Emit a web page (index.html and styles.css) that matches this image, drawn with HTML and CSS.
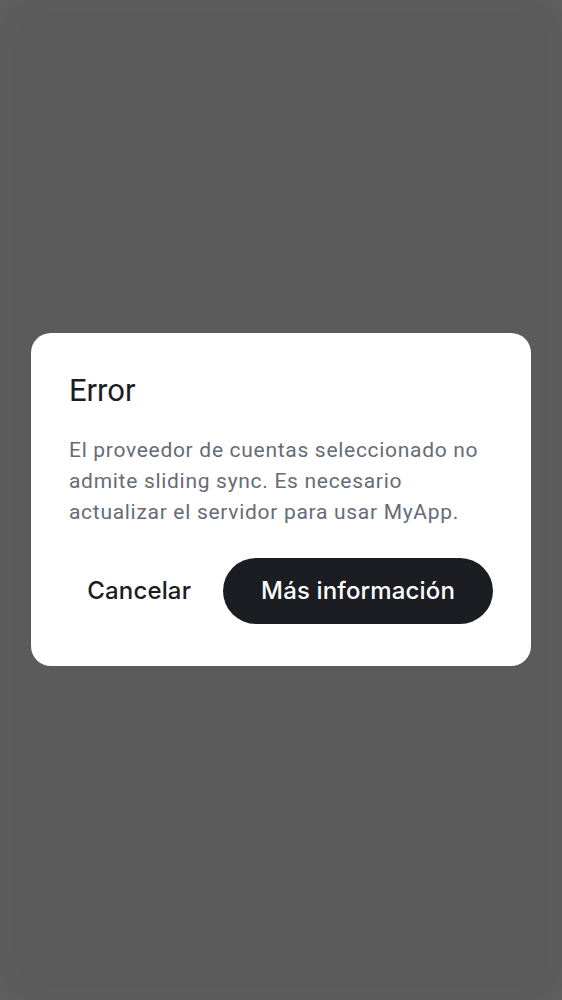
FILE: index.html
```html
<!DOCTYPE html>
<html lang="es">
<head>
<meta charset="utf-8">
<link rel="stylesheet" href="styles.css">
</head>
<body>
<div class="scrim">
  <div class="dialog">
    <h1 class="title">Error</h1>
    <p class="message">El proveedor de cuentas seleccionado no admite sliding sync. Es necesario actualizar el servidor para usar MyApp.</p>
    <div class="actions">
      <button class="btn btn-text">Cancelar</button>
      <button class="btn btn-filled">Más información</button>
    </div>
  </div>
</div>
</body>
</html>
```
FILE: styles.css
```css
html, body {
  margin: 0;
  padding: 0;
  height: 100%;
}
body {
  font-family: Roboto, "Noto Sans", sans-serif;
  background: #5b5b5b;
}
.scrim {
  height: 100%;
  box-sizing: border-box;
  display: flex;
  align-items: center;
  justify-content: center;
  box-shadow: inset 0 0 40px rgba(255,255,255,0.03);
}
.dialog {
  width: 500px;
  box-sizing: border-box;
  background: #ffffff;
  border-radius: 20px;
  padding: 38px 38px 42px 38px;
  margin-top: -2px;
}
.title {
  margin: 0;
  font-size: 31px;
  font-weight: 400;
  color: #1b1d22;
  line-height: 40px;
}
.message {
  margin: 24px 0 0 0;
  font-size: 21px;
  line-height: 31px;
  color: #656c76;
  letter-spacing: 0.7px;
}
.actions {
  margin-top: 30px;
  display: flex;
  justify-content: flex-end;
  align-items: center;
  gap: 12px;
}
.btn {
  font-family: Inter, Roboto, sans-serif;
  font-size: 24px;
  font-weight: 500;
  letter-spacing: 0.15px;
  border: none;
  cursor: pointer;
  height: 66px;
  border-radius: 33px;
  white-space: nowrap;
  flex-shrink: 0;
}
.btn-text {
  background: transparent;
  color: #1b1d22;
  padding: 0 20px;
}
.btn-filled {
  background: #1b1d22;
  color: #ffffff;
  padding: 0 38px;
}
```
